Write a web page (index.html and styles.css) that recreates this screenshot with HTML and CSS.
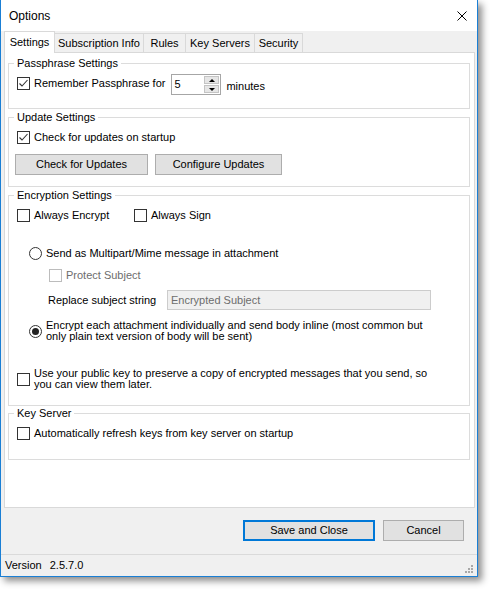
FILE: index.html
```html
<!DOCTYPE html>
<html>
<head>
<meta charset="utf-8">
<title>Options</title>
<link rel="stylesheet" href="styles.css">
</head>
<body>
<div class="window">
  <div class="titlebar">
    <span class="title">Options</span>
    <svg class="close" width="10" height="10" viewBox="0 0 10 10"><path d="M0.5 0.5 L9.5 9.5 M9.5 0.5 L0.5 9.5" stroke="#000" stroke-width="1" fill="none"/></svg>
  </div>
  <div class="client">
    <div class="tabs">
      <div class="tab sel w-set">Settings</div>
      <div class="tab w-sub">Subscription Info</div>
      <div class="tab w-rules">Rules</div>
      <div class="tab w-keys">Key Servers</div>
      <div class="tab w-sec">Security</div>
    </div>
    <div class="panel">
      <div class="group g-pass">
        <div class="gtitle">Passphrase Settings</div>
        <div class="row r-pass">
          <label class="cb"><span class="box"><svg width="11" height="11" viewBox="0 0 11 11"><path d="M1.5 5.5 L4 8 L9.5 2" stroke="#333" stroke-width="1.1" fill="none"/></svg></span><span>Remember Passphrase for</span></label>
          <div class="spin">
            <span class="spin-val">5</span>
            <span class="spin-btns"><span class="sbtn"><span class="tri-up"></span></span><span class="sbtn"><span class="tri-down"></span></span></span>
          </div>
          <span class="minutes">minutes</span>
        </div>
      </div>

      <div class="group g-upd">
        <div class="gtitle">Update Settings</div>
        <div class="row r-first">
          <label class="cb"><span class="box"><svg width="11" height="11" viewBox="0 0 11 11"><path d="M1.5 5.5 L4 8 L9.5 2" stroke="#333" stroke-width="1.1" fill="none"/></svg></span><span>Check for updates on startup</span></label>
        </div>
        <div class="row r-btns">
          <button class="btn w-check">Check for Updates</button>
          <button class="btn w-conf">Configure Updates</button>
        </div>
      </div>

      <div class="group g-enc">
        <div class="gtitle">Encryption Settings</div>
        <div class="row r-first">
          <label class="cb w-enc"><span class="box"></span><span>Always Encrypt</span></label>
          <label class="cb"><span class="box"></span><span>Always Sign</span></label>
        </div>
        <div class="row r-multi">
          <label class="cb"><span class="radio"></span><span>Send as Multipart/Mime message in attachment</span></label>
        </div>
        <div class="row r-protect">
          <label class="cb disabled"><span class="box"></span><span>Protect Subject</span></label>
        </div>
        <div class="row r-replace">
          <span class="rlabel">Replace subject string</span>
          <span class="tinput">Encrypted Subject</span>
        </div>
        <div class="row r-inline">
          <label class="cb multi"><span class="radio on"><span class="dot"></span></span><span>Encrypt each attachment individually and send body inline (most common but<br>only plain text version of body will be sent)</span></label>
        </div>
        <div class="row r-copy">
          <label class="cb multi"><span class="box"></span><span>Use your public key to preserve a copy of encrypted messages that you send, so<br>you can view them later.</span></label>
        </div>
      </div>

      <div class="group g-key">
        <div class="gtitle">Key Server</div>
        <div class="row r-first">
          <label class="cb"><span class="box"></span><span>Automatically refresh keys from key server on startup</span></label>
        </div>
      </div>
    </div>

    <div class="actions">
      <button class="btn default w-save">Save and Close</button>
      <button class="btn w-cancel">Cancel</button>
    </div>

    <div class="status">
      <span class="version">Version<span class="vnum">2.5.7.0</span></span>
      <svg class="grip" width="9" height="9" viewBox="0 0 9 9"><g fill="#a8a8a8"><rect x="7" y="1" width="2" height="2"/><rect x="4" y="4" width="2" height="2"/><rect x="7" y="4" width="2" height="2"/><rect x="1" y="7" width="2" height="2"/><rect x="4" y="7" width="2" height="2"/><rect x="7" y="7" width="2" height="2"/></g></svg>
    </div>
  </div>
</div>
</body>
</html>
```

FILE: styles.css
```css
* { box-sizing: border-box; }
html, body { margin: 0; padding: 0; background: #fff; }
body {
  font-family: "Liberation Sans", Arial, sans-serif;
  font-size: 11px;
  color: #000;
  width: 493px;
  height: 592px;
  overflow: hidden;
}

.window {
  width: 478px;
  height: 577px;
  border: 1px solid #1a7fd5;
  border-top: none;
  background: #fff;
  display: flex;
  flex-direction: column;
  box-shadow: 4px 4px 7px rgba(0, 0, 0, 0.45);
}

.titlebar {
  height: 31px;
  display: flex;
  align-items: center;
  justify-content: space-between;
  padding: 0 10px 0 8px;
  background: #fff;
}
.title { font-size: 12px; line-height: 14px; }
.close { display: block; margin-top: 0; }

.client {
  flex: 1;
  display: flex;
  flex-direction: column;
  background: #f0f0f0;
}

.tabs {
  height: 21px;
  display: flex;
  align-items: flex-end;
  padding-left: 3px;
}
.tab {
  height: 19px;
  border-top: 1px solid #d9d9d9;
  border-right: 1px solid #d9d9d9;
  background: #f0f0f0;
  text-align: center;
  line-height: 18px;
  white-space: nowrap;
}
.tab.sel {
  height: 22px;
  margin-bottom: -1px;
  border-left: 1px solid #d9d9d9;
  background: #fff;
  line-height: 20px;
  position: relative;
  z-index: 1;
}
.w-set { width: 51px; }
.w-sub { width: 89px; }
.w-rules { width: 42px; }
.w-keys { width: 69px; }
.w-sec { width: 48px; }

.panel {
  height: 456px;
  margin: 0 2px 0 3px;
  border: 1px solid #d9d9d9;
  background: #fff;
  padding: 10px 4px 0 3px;
}

.group {
  border: 1px solid #dcdcdc;
  padding: 0 8px;
}
.g-pass { height: 46px; }
.g-upd { height: 70px; margin-top: 8px; }
.g-enc { height: 211px; margin-top: 8px; }
.g-key { height: 47px; margin-top: 7px; }

.gtitle {
  width: fit-content;
  margin: -7px 0 0 -3px;
  padding: 0 3px;
  background: #fff;
  line-height: 13px;
  white-space: nowrap;
}

.row { display: flex; align-items: flex-start; }

.cb {
  display: flex;
  align-items: center;
  gap: 4px;
  line-height: 13px;
  white-space: nowrap;
}
.cb.multi { line-height: 11px; }

.box {
  width: 13px;
  height: 13px;
  flex: none;
  border: 1px solid #333;
  background: #fff;
  display: flex;
  align-items: center;
  justify-content: center;
}
.box svg { display: block; }
.disabled { color: #6d6d6d; }
.disabled .box { border-color: #bcbcbc; }

.radio {
  width: 13px;
  height: 13px;
  flex: none;
  border: 1px solid #333;
  border-radius: 50%;
  background: #fff;
  display: flex;
  align-items: center;
  justify-content: center;
}
.radio .dot {
  width: 7px;
  height: 7px;
  border-radius: 50%;
  background: #222;
}

/* Passphrase row */
.r-pass { margin-top: 4px; }
.r-pass .cb { margin-top: 3px; }
.spin {
  margin-left: 6px;
  width: 50px;
  height: 21px;
  border: 1px solid #a6a6a6;
  background: #fff;
  display: flex;
}
.spin-val { flex: 1; padding-left: 2px; line-height: 19px; }
.spin-btns {
  width: 16px;
  display: flex;
  flex-direction: column;
  gap: 1px;
  padding: 1px 1px 1px 0;
}
.sbtn {
  flex: 1;
  background: #e6e6e6;
  border: 1px solid #c4c4c4;
  display: flex;
  align-items: center;
  justify-content: center;
}
.tri-up {
  width: 0; height: 0;
  border-left: 3px solid transparent;
  border-right: 3px solid transparent;
  border-bottom: 3px solid #000;
}
.tri-down {
  width: 0; height: 0;
  border-left: 3px solid transparent;
  border-right: 3px solid transparent;
  border-top: 3px solid #000;
}
.minutes { margin-left: 5px; margin-top: 6px; line-height: 13px; }

/* Update */
.r-first { margin-top: 7px; }
.r-btns { margin-top: 10px; margin-left: -2px; gap: 7px; }

.btn {
  font-family: "Liberation Sans", Arial, sans-serif;
  font-size: 11px;
  color: #000;
  height: 21px;
  padding: 0;
  background: #e1e1e1;
  border: 1px solid #adadad;
  border-radius: 0;
  line-height: 19px;
  text-align: center;
}
.btn.default { border: 2px solid #0078d7; line-height: 17px; }
.w-check { width: 133px; }
.w-conf { width: 127px; }
.w-save { width: 132px; }
.w-cancel { width: 81px; }

/* Encryption */
.w-enc { width: 117px; }
.r-multi { margin-top: 25px; padding-left: 12px; }
.r-protect { margin-top: 9px; padding-left: 32px; }
.r-replace { margin-top: 8px; padding-left: 31px; }
.rlabel { width: 119px; line-height: 20px; white-space: nowrap; }
.tinput {
  width: 264px;
  height: 20px;
  border: 1px solid #cccccc;
  background: #f0f0f0;
  color: #6d6d6d;
  padding-left: 3px;
  line-height: 18px;
}
.r-inline { margin-top: 10px; padding-left: 12px; }
.r-copy { margin-top: 26px; }

/* Footer */
.actions {
  margin-top: 12px;
  display: flex;
  justify-content: flex-end;
  gap: 8px;
  padding-right: 13px;
}

.status {
  margin-top: auto;
  height: 22px;
  border-top: 1px solid #dadada;
  display: flex;
  align-items: center;
  justify-content: space-between;
  padding: 0 4px 0 4px;
}
.version { line-height: 13px; }
.vnum { margin-left: 8px; }
.grip { align-self: flex-end; margin-bottom: 3px; display: block; }
```
